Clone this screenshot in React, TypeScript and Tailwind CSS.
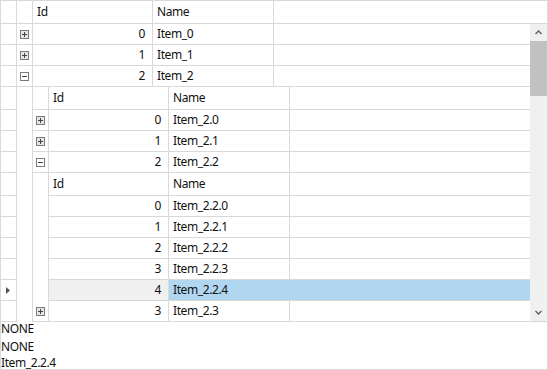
import React from "react";

const LINE = "border-[#d9d9d9]";

function PlusMinus({ open }: { open: boolean }) {
  return (
    <svg width="9" height="9" viewBox="0 0 9 9" className="block">
      <rect x="0.5" y="0.5" width="8" height="8" fill={open ? "#ffffff" : "#e6e6e6"} stroke="#7a7a7a" />
      <line x1="2" y1="4.5" x2="7" y2="4.5" stroke="#444" />
      {!open && <line x1="4.5" y1="2" x2="4.5" y2="7" stroke="#444" />}
    </svg>
  );
}

function RowHead({ indicator }: { indicator?: boolean }) {
  return (
    <div className={`w-[16px] shrink-0 border-r border-b ${LINE} flex items-center justify-center`}>
      {indicator && (
        <svg width="4" height="7" viewBox="0 0 4 7" className="block ml-[-1px]">
          <polygon points="0,0 4,3.5 0,7" fill="#555" />
        </svg>
      )}
    </div>
  );
}

function Blank() {
  return <div className={`w-[16px] shrink-0 border-r ${LINE}`} />;
}

function HeadBlank() {
  return <div className={`w-[16px] shrink-0 border-r border-b ${LINE}`} />;
}

function Expand({ open }: { open: boolean }) {
  return (
    <div className={`w-[16px] shrink-0 border-r border-b ${LINE} flex items-center pl-[3px]`}>
      <PlusMinus open={open} />
    </div>
  );
}

function IdHead() {
  return <div className={`w-[120px] shrink-0 border-r border-b ${LINE} flex items-center pl-[4px]`}>Id</div>;
}
function NameHead() {
  return <div className={`w-[121px] shrink-0 border-r border-b ${LINE} flex items-center pl-[4px]`}>Name</div>;
}
function Fill({ sel }: { sel?: boolean }) {
  return <div className={`flex-1 border-b ${LINE} ${sel ? "bg-[#b1d6f0]" : ""}`} />;
}

function IdCell({ v, sel }: { v: string; sel?: boolean }) {
  return (
    <div className={`w-[120px] shrink-0 border-r border-b ${LINE} flex items-center justify-end pr-[7px] ${sel ? "bg-[#f0f0f0]" : ""}`}>
      {v}
    </div>
  );
}
function NameCell({ v, sel }: { v: string; sel?: boolean }) {
  return (
    <div className={`w-[121px] shrink-0 border-b ${sel ? "bg-[#b1d6f0] border-r-0" : "border-r"} ${LINE} flex items-center pl-[4px]`}>
      {v}
    </div>
  );
}

export default function App() {
  return (
    <div
      className="w-[548px] h-[370px] overflow-hidden bg-white text-[12px] tracking-[-0.4px] text-[#111]"
      style={{ fontFamily: '"Noto Sans", "Open Sans", sans-serif' }}
    >
      <div className={`w-[548px] border-t border-x ${LINE}`}>
        <div className="flex h-[23px]">
          <RowHead />
          <HeadBlank />
          <IdHead />
          <NameHead />
          <Fill />
        </div>
        <div className="flex">
          <div className="w-[529px] flex flex-col">
            <div className="flex h-[21px]"><RowHead /><Expand open={false} /><IdCell v="0" /><NameCell v="Item_0" /><Fill /></div>
            <div className="flex h-[21px]"><RowHead /><Expand open={false} /><IdCell v="1" /><NameCell v="Item_1" /><Fill /></div>
            <div className="flex h-[21px]"><RowHead /><Expand open={true} /><IdCell v="2" /><NameCell v="Item_2" /><Fill /></div>
            <div className="flex h-[23px]"><RowHead /><Blank /><HeadBlank /><IdHead /><NameHead /><Fill /></div>
            <div className="flex h-[21px]"><RowHead /><Blank /><Expand open={false} /><IdCell v="0" /><NameCell v="Item_2.0" /><Fill /></div>
            <div className="flex h-[21px]"><RowHead /><Blank /><Expand open={false} /><IdCell v="1" /><NameCell v="Item_2.1" /><Fill /></div>
            <div className="flex h-[21px]"><RowHead /><Blank /><Expand open={true} /><IdCell v="2" /><NameCell v="Item_2.2" /><Fill /></div>
            <div className="flex h-[23px]"><RowHead /><Blank /><Blank /><IdHead /><NameHead /><Fill /></div>
            <div className="flex h-[21px]"><RowHead /><Blank /><Blank /><IdCell v="0" /><NameCell v="Item_2.2.0" /><Fill /></div>
            <div className="flex h-[21px]"><RowHead /><Blank /><Blank /><IdCell v="1" /><NameCell v="Item_2.2.1" /><Fill /></div>
            <div className="flex h-[21px]"><RowHead /><Blank /><Blank /><IdCell v="2" /><NameCell v="Item_2.2.2" /><Fill /></div>
            <div className="flex h-[21px]"><RowHead /><Blank /><Blank /><IdCell v="3" /><NameCell v="Item_2.2.3" /><Fill /></div>
            <div className="flex h-[21px]"><RowHead indicator /><Blank /><Blank /><IdCell v="4" sel /><NameCell v="Item_2.2.4" sel /><Fill sel /></div>
            <div className="flex h-[21px]"><RowHead /><Blank /><Expand open={false} /><IdCell v="3" /><NameCell v="Item_2.3" /><Fill /></div>
          </div>
          <div className={`w-[17px] border-b ${LINE} bg-[#f0f0f0] flex flex-col`}>
            <div className="h-[17px] flex items-center justify-center">
              <svg width="7" height="5" viewBox="0 0 7 5" className="block">
                <polyline points="0.5,4 3.5,1 6.5,4" fill="none" stroke="#606060" strokeWidth="1.4" />
              </svg>
            </div>
            <div className="h-[55px] bg-[#c1c1c1]" />
            <div className="flex-1" />
            <div className="h-[17px] flex items-center justify-center">
              <svg width="7" height="5" viewBox="0 0 7 5" className="block">
                <polyline points="0.5,1 3.5,4 6.5,1" fill="none" stroke="#606060" strokeWidth="1.4" />
              </svg>
            </div>
          </div>
        </div>
      </div>
      <div className={`w-[548px] h-[48px] border-x border-b ${LINE} flex flex-col gap-[2px]`}>
        <div className="h-[16px] leading-[16px] mt-[-1px] shrink-0">NONE</div>
        <div className="h-[16px] leading-[16px] shrink-0">NONE</div>
        <div className="h-[14px] leading-[14px] mt-[-1px] shrink-0">Item_2.2.4</div>
      </div>
    </div>
  );
}
